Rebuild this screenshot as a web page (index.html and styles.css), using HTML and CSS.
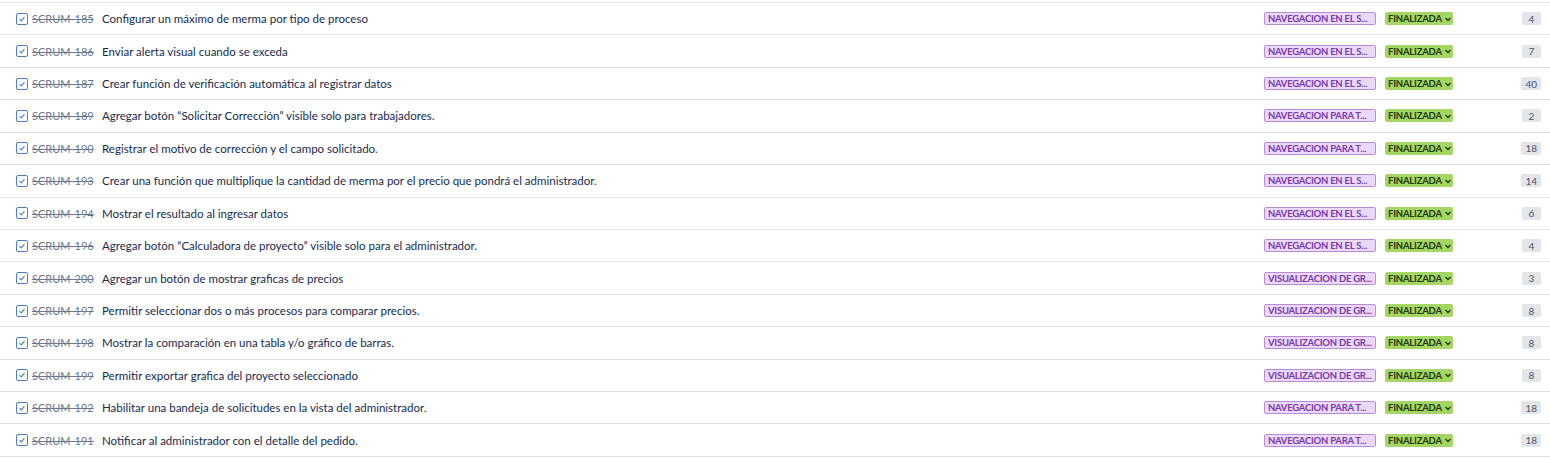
FILE: index.html
```html
<!DOCTYPE html>
<html lang="es">
<head>
<meta charset="utf-8">
<title>Backlog</title>
<link rel="stylesheet" href="styles.css">
</head>
<body>
<ul class="list">
  <li class="row"><span class="cb"><svg viewBox="0 0 12 12"><path d="M3 6.2 L5.2 8.3 L9 3.8"/></svg></span><span class="key">SCRUM-185</span><span class="sum">Configurar un máximo de merma por tipo de proceso</span><span class="label">NAVEGACION EN EL S...</span><span class="status">FINALIZADA<svg viewBox="0 0 8 8"><path d="M1.5 3 L4 5.5 L6.5 3"/></svg></span><span class="est"><span class="num">4</span></span></li>
  <li class="row"><span class="cb"><svg viewBox="0 0 12 12"><path d="M3 6.2 L5.2 8.3 L9 3.8"/></svg></span><span class="key">SCRUM-186</span><span class="sum">Enviar alerta visual cuando se exceda</span><span class="label">NAVEGACION EN EL S...</span><span class="status">FINALIZADA<svg viewBox="0 0 8 8"><path d="M1.5 3 L4 5.5 L6.5 3"/></svg></span><span class="est"><span class="num">7</span></span></li>
  <li class="row"><span class="cb"><svg viewBox="0 0 12 12"><path d="M3 6.2 L5.2 8.3 L9 3.8"/></svg></span><span class="key">SCRUM-187</span><span class="sum">Crear función de verificación automática al registrar datos</span><span class="label">NAVEGACION EN EL S...</span><span class="status">FINALIZADA<svg viewBox="0 0 8 8"><path d="M1.5 3 L4 5.5 L6.5 3"/></svg></span><span class="est"><span class="num">40</span></span></li>
  <li class="row"><span class="cb"><svg viewBox="0 0 12 12"><path d="M3 6.2 L5.2 8.3 L9 3.8"/></svg></span><span class="key">SCRUM-189</span><span class="sum">Agregar botón “Solicitar Corrección” visible solo para trabajadores.</span><span class="label">NAVEGACION PARA T...</span><span class="status">FINALIZADA<svg viewBox="0 0 8 8"><path d="M1.5 3 L4 5.5 L6.5 3"/></svg></span><span class="est"><span class="num">2</span></span></li>
  <li class="row"><span class="cb"><svg viewBox="0 0 12 12"><path d="M3 6.2 L5.2 8.3 L9 3.8"/></svg></span><span class="key">SCRUM-190</span><span class="sum">Registrar el motivo de corrección y el campo solicitado.</span><span class="label">NAVEGACION PARA T...</span><span class="status">FINALIZADA<svg viewBox="0 0 8 8"><path d="M1.5 3 L4 5.5 L6.5 3"/></svg></span><span class="est"><span class="num">18</span></span></li>
  <li class="row"><span class="cb"><svg viewBox="0 0 12 12"><path d="M3 6.2 L5.2 8.3 L9 3.8"/></svg></span><span class="key">SCRUM-193</span><span class="sum">Crear una función que multiplique la cantidad de merma por el precio que pondrá el administrador.</span><span class="label">NAVEGACION EN EL S...</span><span class="status">FINALIZADA<svg viewBox="0 0 8 8"><path d="M1.5 3 L4 5.5 L6.5 3"/></svg></span><span class="est"><span class="num">14</span></span></li>
  <li class="row"><span class="cb"><svg viewBox="0 0 12 12"><path d="M3 6.2 L5.2 8.3 L9 3.8"/></svg></span><span class="key">SCRUM-194</span><span class="sum">Mostrar el resultado al ingresar datos</span><span class="label">NAVEGACION EN EL S...</span><span class="status">FINALIZADA<svg viewBox="0 0 8 8"><path d="M1.5 3 L4 5.5 L6.5 3"/></svg></span><span class="est"><span class="num">6</span></span></li>
  <li class="row"><span class="cb"><svg viewBox="0 0 12 12"><path d="M3 6.2 L5.2 8.3 L9 3.8"/></svg></span><span class="key">SCRUM-196</span><span class="sum">Agregar botón “Calculadora de proyecto” visible solo para el administrador.</span><span class="label">NAVEGACION EN EL S...</span><span class="status">FINALIZADA<svg viewBox="0 0 8 8"><path d="M1.5 3 L4 5.5 L6.5 3"/></svg></span><span class="est"><span class="num">4</span></span></li>
  <li class="row"><span class="cb"><svg viewBox="0 0 12 12"><path d="M3 6.2 L5.2 8.3 L9 3.8"/></svg></span><span class="key">SCRUM-200</span><span class="sum">Agregar un botón de mostrar graficas de precios</span><span class="label">VISUALIZACION DE GR...</span><span class="status">FINALIZADA<svg viewBox="0 0 8 8"><path d="M1.5 3 L4 5.5 L6.5 3"/></svg></span><span class="est"><span class="num">3</span></span></li>
  <li class="row"><span class="cb"><svg viewBox="0 0 12 12"><path d="M3 6.2 L5.2 8.3 L9 3.8"/></svg></span><span class="key">SCRUM-197</span><span class="sum">Permitir seleccionar dos o más procesos para comparar precios.</span><span class="label">VISUALIZACION DE GR...</span><span class="status">FINALIZADA<svg viewBox="0 0 8 8"><path d="M1.5 3 L4 5.5 L6.5 3"/></svg></span><span class="est"><span class="num">8</span></span></li>
  <li class="row"><span class="cb"><svg viewBox="0 0 12 12"><path d="M3 6.2 L5.2 8.3 L9 3.8"/></svg></span><span class="key">SCRUM-198</span><span class="sum">Mostrar la comparación en una tabla y/o gráfico de barras.</span><span class="label">VISUALIZACION DE GR...</span><span class="status">FINALIZADA<svg viewBox="0 0 8 8"><path d="M1.5 3 L4 5.5 L6.5 3"/></svg></span><span class="est"><span class="num">8</span></span></li>
  <li class="row"><span class="cb"><svg viewBox="0 0 12 12"><path d="M3 6.2 L5.2 8.3 L9 3.8"/></svg></span><span class="key">SCRUM-199</span><span class="sum">Permitir exportar grafica del proyecto seleccionado</span><span class="label">VISUALIZACION DE GR...</span><span class="status">FINALIZADA<svg viewBox="0 0 8 8"><path d="M1.5 3 L4 5.5 L6.5 3"/></svg></span><span class="est"><span class="num">8</span></span></li>
  <li class="row"><span class="cb"><svg viewBox="0 0 12 12"><path d="M3 6.2 L5.2 8.3 L9 3.8"/></svg></span><span class="key">SCRUM-192</span><span class="sum">Habilitar una bandeja de solicitudes en la vista del administrador.</span><span class="label">NAVEGACION PARA T...</span><span class="status">FINALIZADA<svg viewBox="0 0 8 8"><path d="M1.5 3 L4 5.5 L6.5 3"/></svg></span><span class="est"><span class="num">18</span></span></li>
  <li class="row"><span class="cb"><svg viewBox="0 0 12 12"><path d="M3 6.2 L5.2 8.3 L9 3.8"/></svg></span><span class="key">SCRUM-191</span><span class="sum">Notificar al administrador con el detalle del pedido.</span><span class="label">NAVEGACION PARA T...</span><span class="status">FINALIZADA<svg viewBox="0 0 8 8"><path d="M1.5 3 L4 5.5 L6.5 3"/></svg></span><span class="est"><span class="num">18</span></span></li>
</ul>
</body>
</html>
```
FILE: styles.css
```css
html, body {
  margin: 0;
  padding: 0;
  background: #ffffff;
}
body {
  font-family: Lato, "Open Sans", sans-serif;
  font-size: 11.5px;
  color: #172b4d;
}
.list {
  list-style: none;
  margin: 2px 0 0 0;
  padding: 0;
  border-top: 1px solid #dfe1e6;
}
.row {
  box-sizing: border-box;
  height: 32.43px;
  border-bottom: 1px solid #dfe1e6;
  display: flex;
  align-items: center;
  padding: 0 9px 0 16px;
}
.cb {
  box-sizing: border-box;
  width: 12px;
  height: 12px;
  border: 1px solid #4b7fc4;
  border-radius: 2px;
  background: #fff;
  display: flex;
  align-items: center;
  justify-content: center;
  margin-right: 4px;
  flex: none;
}
.cb svg {
  width: 10px;
  height: 10px;
  fill: none;
  stroke: #4b7fc4;
  stroke-width: 1.3;
}
.key {
  width: 70px;
  flex: none;
  color: #6b778c;
  text-decoration: line-through;
  white-space: nowrap;
  font-size: 11px;
}
.sum {
  flex: 1;
  white-space: nowrap;
  overflow: hidden;
}
.label {
  box-sizing: border-box;
  width: 112px;
  height: 13px;
  flex: none;
  display: flex;
  align-items: center;
  padding: 0 3px;
  background: #ead9fb;
  border: 1px solid #b98bd9;
  border-radius: 2px;
  color: #7a3aa6;
  font-size: 9.5px;
  font-weight: 700;
  letter-spacing: -0.25px;
  white-space: nowrap;
  margin-right: 9px;
}
.status {
  box-sizing: border-box;
  width: 68px;
  height: 13px;
  flex: none;
  display: flex;
  align-items: center;
  padding: 0 3px;
  background: #a4d565;
  border-radius: 2px;
  color: #1c3a0d;
  font-size: 9.5px;
  font-weight: 700;
  letter-spacing: -0.2px;
  white-space: nowrap;
}
.status svg {
  flex: none;
  width: 8px;
  height: 8px;
  margin-left: 2px;
  fill: none;
  stroke: #1c3a0d;
  stroke-width: 1.3;
}
.est {
  flex: none;
  width: 88px;
  display: flex;
  justify-content: flex-end;
}
.num {
  box-sizing: border-box;
  min-width: 19px;
  height: 13px;
  padding: 0 4px;
  display: flex;
  align-items: center;
  justify-content: center;
  background: #e4e5e8;
  border-radius: 2px;
  color: #44546f;
  font-size: 10px;
}
```
